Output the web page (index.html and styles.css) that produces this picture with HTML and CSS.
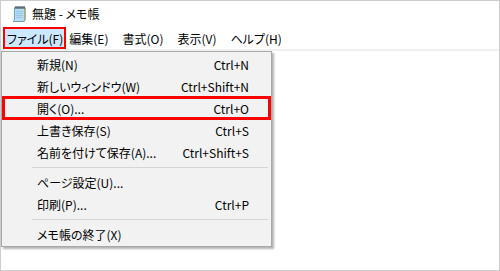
FILE: index.html
```html
<!DOCTYPE html>
<html lang="ja">
<head>
<meta charset="utf-8">
<title>無題 - メモ帳</title>
<link rel="stylesheet" href="styles.css">
</head>
<body>
<div class="window">
  <div class="titlebar">
    <svg class="app-icon" width="15" height="17" viewBox="0 0 15 17">
      <path d="M2.5 2.5 H13 V14.5 L12 16.5 H1.5 L2.5 14.5 Z" fill="#b4dcf2" stroke="#6f9fbf" stroke-width="1"/>
      <path d="M13 3 V14.5 L12 16.5" fill="none" stroke="#b0a060" stroke-width="1.2"/>
      <path d="M4 6.5 H11 M4 8.5 H11 M4 10.5 H11 M4 12.5 H10" stroke="#8fc3e2" stroke-width="0.8"/>
      <g fill="#3a3a3a">
        <rect x="3.5" y="1" width="1" height="3"/>
        <rect x="5.5" y="1" width="1" height="3"/>
        <rect x="7.5" y="1" width="1" height="3"/>
        <rect x="9.5" y="1" width="1" height="3"/>
        <rect x="11.5" y="1" width="1" height="3"/>
      </g>
    </svg>
    <span class="title-text">無題 - メモ帳</span>
  </div>
  <div class="menubar">
    <span class="menubar-item is-open">ファイル(F)</span>
    <span class="menubar-item">編集(E)</span>
    <span class="menubar-item">書式(O)</span>
    <span class="menubar-item">表示(V)</span>
    <span class="menubar-item">ヘルプ(H)</span>
  </div>
  <div class="editor"></div>

  <div class="dropdown">
    <div class="dd-item"><span>新規(N)</span><span>Ctrl+N</span></div>
    <div class="dd-item"><span>新しいウィンドウ(W)</span><span>Ctrl+Shift+N</span></div>
    <div class="dd-item is-marked"><span>開く(O)...</span><span>Ctrl+O</span></div>
    <div class="dd-item"><span>上書き保存(S)</span><span>Ctrl+S</span></div>
    <div class="dd-item"><span>名前を付けて保存(A)...</span><span>Ctrl+Shift+S</span></div>
    <div class="dd-sep"></div>
    <div class="dd-item"><span>ページ設定(U)...</span><span></span></div>
    <div class="dd-item"><span>印刷(P)...</span><span>Ctrl+P</span></div>
    <div class="dd-sep"></div>
    <div class="dd-item"><span>メモ帳の終了(X)</span><span></span></div>
  </div>
</div>
</body>
</html>
```

FILE: styles.css
```css
html, body {
  margin: 0;
  padding: 0;
  background: #ffffff;
}

body {
  font-family: "Noto Sans CJK JP", "Noto Sans", sans-serif;
  font-size: 12px;
  color: #000;
  font-feature-settings: "palt";
}

.window {
  position: relative;
  width: 500px;
  height: 271px;
  box-sizing: border-box;
  border: 1px solid #cdcdcd;
  background: #fff;
  overflow: hidden;
}

.titlebar {
  height: 26px;
  display: flex;
  align-items: center;
  padding-left: 11px;
  gap: 5px;
}

.app-icon {
  display: block;
  margin-top: -1px;
}

.title-text {
  line-height: 16px;
}

.menubar {
  height: 22px;
  display: flex;
  align-items: stretch;
  padding-left: 2px;
  border-bottom: 2px solid #f0f0f0;
}

.menubar-item {
  display: flex;
  align-items: center;
  padding: 0 6px;
  border: 2px solid transparent;
  margin-right: -2px;
}

.menubar-item.is-open {
  background: #cce8ff;
  border-color: #ff0000;
  padding: 0 1px 0 2px;
  margin-right: -5px;
}

.editor {
  flex: 1;
}

.dropdown {
  position: absolute;
  left: 0;
  top: 50px;
  width: 271px;
  box-sizing: border-box;
  background: #f2f2f2;
  border: 1px solid #a8a8a8;
  padding: 1px 1px;
  box-shadow: 2px 2px 2px rgba(0, 0, 0, 0.3);
}

.dd-item {
  position: relative;
  height: 22px;
  display: flex;
  align-items: center;
  justify-content: space-between;
  padding: 0 21px 0 34px;
}

.dd-item.is-marked::after {
  content: "";
  position: absolute;
  left: -1px;
  right: -1px;
  top: -1px;
  bottom: -1px;
  border: 3px solid #ff0000;
}

.dd-sep {
  height: 8px;
  display: flex;
  align-items: center;
  padding: 0 2px 0 29px;
}

.dd-sep::before {
  content: "";
  display: block;
  flex: 1;
  height: 1px;
  background: #d5d5d5;
}
```
